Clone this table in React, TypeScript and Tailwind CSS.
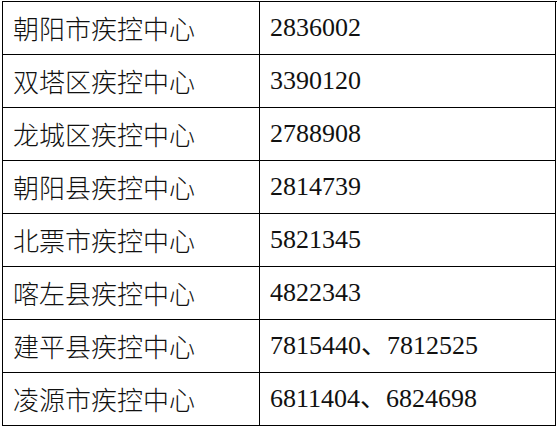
const rows: [string, string][] = [
  ['朝阳市疾控中心', '2836002'],
  ['双塔区疾控中心', '3390120'],
  ['龙城区疾控中心', '2788908'],
  ['朝阳县疾控中心', '2814739'],
  ['北票市疾控中心', '5821345'],
  ['喀左县疾控中心', '4822343'],
  ['建平县疾控中心', '7815440、7812525'],
  ['凌源市疾控中心', '6811404、6824698'],
];

export default function App() {
  return (
    <div className="w-[557px] h-[429px] bg-white pt-[1px] pl-[2px]">
      <div className="grid grid-cols-[257px_296px] border-t border-l border-black text-[#111] font-['Liberation_Serif','Noto_Sans_CJK_SC',serif] text-[26px] leading-none">
        {rows.map(([name, phone]) => (
          <div key={name} className="contents">
            <div className="h-[53px] flex items-center pl-[10px] border-r border-b border-black font-['Noto_Sans_CJK_SC',sans-serif] text-[26px] font-light">
              {name}
            </div>
            <div className="h-[53px] flex items-center pl-[10px] border-r border-b border-black">
              {phone}
            </div>
          </div>
        ))}
      </div>
    </div>
  );
}
